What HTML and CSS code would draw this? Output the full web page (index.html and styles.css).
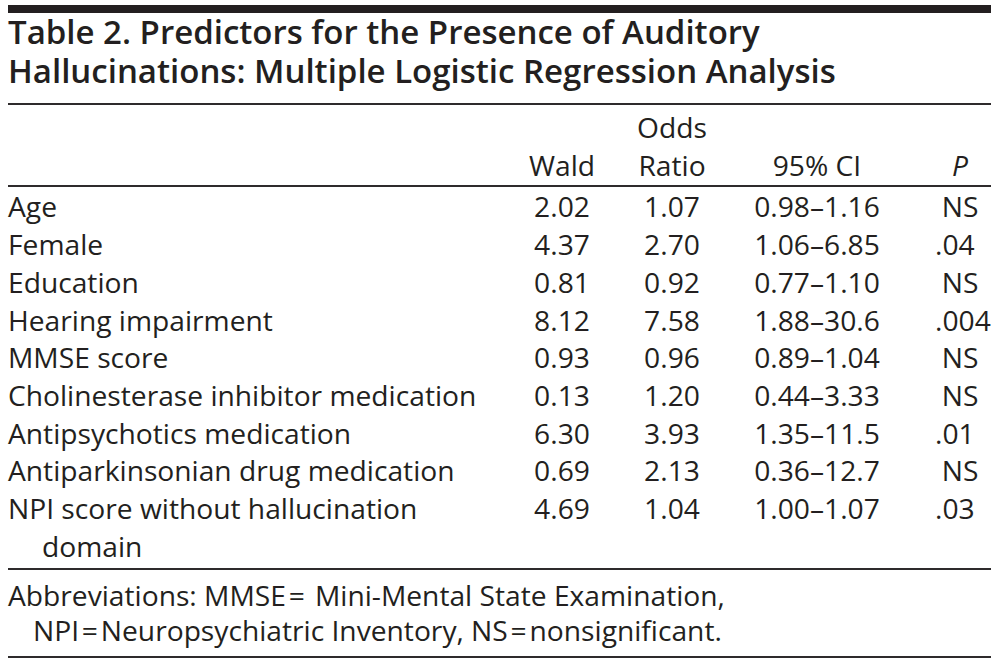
FILE: index.html
```html
<!DOCTYPE html>
<html lang="en">
<head>
<meta charset="utf-8">
<title>Table 2</title>
<link rel="stylesheet" href="styles.css">
</head>
<body>
<div class="page">
  <div class="topbar"></div>
  <h1 class="title"><span class="title-line">Table 2. Predictors for the Presence of Auditory</span><span class="title-line">Hallucinations: Multiple Logistic Regression Analysis</span></h1>
  <table class="data">
    <colgroup>
      <col class="c-label"><col class="c-wald"><col class="c-or"><col class="c-ci"><col class="c-p">
    </colgroup>
    <thead>
      <tr>
        <th class="label"></th>
        <th>Wald</th>
        <th>Odds<br>Ratio</th>
        <th class="ci">95% CI</th>
        <th class="p"><i>P</i></th>
      </tr>
    </thead>
    <tbody>
      <tr><td class="label">Age</td><td>2.02</td><td>1.07</td><td class="ci">0.98–1.16</td><td class="p">NS</td></tr>
      <tr><td class="label">Female</td><td>4.37</td><td>2.70</td><td class="ci">1.06–6.85</td><td class="p dec">.04</td></tr>
      <tr><td class="label">Education</td><td>0.81</td><td>0.92</td><td class="ci">0.77–1.10</td><td class="p">NS</td></tr>
      <tr><td class="label">Hearing impairment</td><td>8.12</td><td>7.58</td><td class="ci">1.88–30.6</td><td class="p dec">.004</td></tr>
      <tr><td class="label">MMSE score</td><td>0.93</td><td>0.96</td><td class="ci">0.89–1.04</td><td class="p">NS</td></tr>
      <tr><td class="label">Cholinesterase inhibitor medication</td><td>0.13</td><td>1.20</td><td class="ci">0.44–3.33</td><td class="p">NS</td></tr>
      <tr><td class="label">Antipsychotics medication</td><td>6.30</td><td>3.93</td><td class="ci">1.35–11.5</td><td class="p dec">.01</td></tr>
      <tr><td class="label">Antiparkinsonian drug medication</td><td>0.69</td><td>2.13</td><td class="ci">0.36–12.7</td><td class="p">NS</td></tr>
      <tr><td class="label">NPI score without hallucination<br>domain</td><td>4.69</td><td>1.04</td><td class="ci">1.00–1.07</td><td class="p dec">.03</td></tr>
    </tbody>
  </table>
  <p class="foot">Abbreviations: MMSE&#8202;= &#8202;Mini-Mental State Examination,<br>NPI&#8202;=&#8202;Neuropsychiatric Inventory, NS&#8202;=&#8202;nonsignificant.</p>
</div>
</body>
</html>
```
FILE: styles.css
```css
html, body {
  margin: 0;
  padding: 0;
  background: #ffffff;
}

body {
  font-family: "Open Sans", "Noto Sans", sans-serif;
  color: #231f20;
}

.page {
  width: 983px;
  margin-left: 8px;
  padding-top: 5px;
}

.topbar {
  height: 8px;
  background: #231f20;
}

.title {
  margin: 0;
  font-size: 33px;
  font-weight: 600;
  line-height: 38.5px;
  padding-top: 0;
  padding-bottom: 13px;
  border-bottom: 2px solid #2e2b2c;
  white-space: nowrap;
}

.title-line {
  display: block;
}

.data {
  width: 983px;
  table-layout: fixed;
  border-collapse: collapse;
  font-size: 28.2px;
  line-height: 37.7px;
}

.c-label { width: 514px; }
.c-wald { width: 80px; }
.c-or { width: 140px; }
.c-ci { width: 187px; }
.c-p { width: 62px; }

.data th,
.data td {
  padding: 0;
  font-weight: 400;
  text-align: center;
  vertical-align: top;
  white-space: nowrap;
}

.data thead th {
  vertical-align: bottom;
  padding-top: 4px;
  padding-bottom: 1px;
}

.data thead tr {
  border-bottom: 2px solid #2e2b2c;
}

.data tbody {
  border-bottom: 2px solid #2e2b2c;
}

.data tbody tr:first-child td {
  padding-top: 1px;
}

.data tbody tr:last-child td {
  padding-bottom: 3px;
}

.data .label {
  text-align: left;
  padding-left: 34px;
  text-indent: -34px;
}

.data .ci {
  padding-right: 37px;
}

.data td.dec {
  text-align: left;
  padding-left: 6px;
}

.foot {
  margin: 0;
  font-size: 28.2px;
  line-height: 35px;
  padding-top: 8px;
  padding-bottom: 8px;
  padding-left: 25px;
  text-indent: -25px;
  border-bottom: 2px solid #2e2b2c;
}
```
